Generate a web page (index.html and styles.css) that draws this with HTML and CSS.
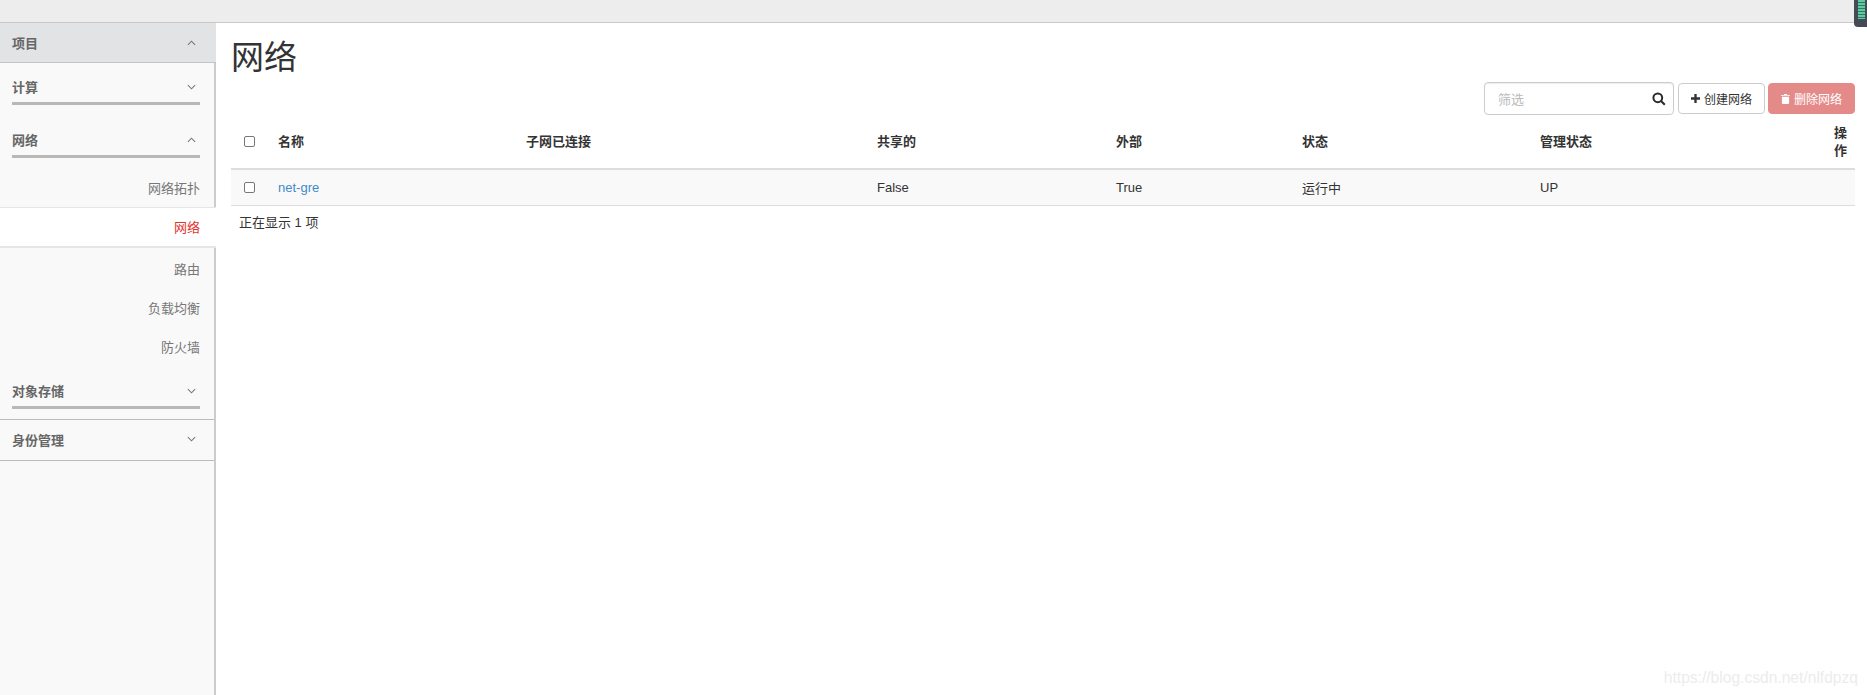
FILE: index.html
```html
<!DOCTYPE html>
<html lang="zh">
<head>
  <meta charset="UTF-8">
  <title>网络</title>
  <link rel="stylesheet" href="styles.css">
</head>
<body>
  <div class="topbar">
    <div class="meter"><span></span></div>
  </div>
  <div class="layout">
    <nav class="sidebar">
      <div class="project">
        <span>项目</span>
        <svg class="chev" viewBox="0 0 10 6"><path d="M1 5l4-4 4 4"/></svg>
      </div>
      <div class="group">
        <div class="group-title">
          <span>计算</span>
          <svg class="chev" viewBox="0 0 10 6"><path d="M1 1l4 4 4-4"/></svg>
        </div>
      </div>
      <div class="group">
        <div class="group-title">
          <span>网络</span>
          <svg class="chev" viewBox="0 0 10 6"><path d="M1 5l4-4 4 4"/></svg>
        </div>
      </div>
      <a class="item topo">网络拓扑</a>
      <a class="item active">网络</a>
      <a class="item after-active">路由</a>
      <a class="item">负载均衡</a>
      <a class="item">防火墙</a>
      <div class="group last">
        <div class="group-title">
          <span>对象存储</span>
          <svg class="chev" viewBox="0 0 10 6"><path d="M1 1l4 4 4-4"/></svg>
        </div>
      </div>
      <div class="identity">
        <span>身份管理</span>
        <svg class="chev" viewBox="0 0 10 6"><path d="M1 1l4 4 4-4"/></svg>
      </div>
    </nav>
    <main class="content">
      <h1>网络</h1>
      <div class="actions">
        <div class="filter">
          <span class="placeholder">筛选</span>
          <svg class="search" viewBox="0 0 14 14"><circle cx="5.8" cy="5.8" r="4.4"/><path d="M9 9l3.8 3.8"/></svg>
        </div>
        <button class="btn create">
          <svg class="plus" viewBox="0 0 10 10"><path d="M5 0v10M0 5h10"/></svg>创建网络
        </button>
        <button class="btn danger">
          <svg class="trash" viewBox="0 0 10 11"><path d="M3.5 0h3l.5 1h3v1H0V1h3zM1 3h8v7a1 1 0 0 1-1 1H2a1 1 0 0 1-1-1z"/></svg>删除网络
        </button>
      </div>
      <table class="net-table">
        <thead>
          <tr>
            <th class="c-check"><span class="check"></span></th>
            <th class="c-name">名称</th>
            <th class="c-subnet">子网已连接</th>
            <th class="c-shared">共享的</th>
            <th class="c-ext">外部</th>
            <th class="c-status">状态</th>
            <th class="c-admin">管理状态</th>
            <th class="c-ops">操作</th>
          </tr>
        </thead>
        <tbody>
          <tr>
            <td><span class="check"></span></td>
            <td><a class="link">net-gre</a></td>
            <td></td>
            <td>False</td>
            <td>True</td>
            <td>运行中</td>
            <td>UP</td>
            <td></td>
          </tr>
        </tbody>
      </table>
      <div class="count">正在显示 1 项</div>
    </main>
  </div>
  <div class="watermark">https://blog.csdn.net/nlfdpzq</div>
</body>
</html>
```

FILE: styles.css
```css
* { box-sizing: border-box; }
html, body { height: 100%; }
body {
  margin: 0;
  height: 695px;
  overflow: hidden;
  position: relative;
  font-family: "Liberation Sans", "Noto Sans CJK SC", sans-serif;
  font-size: 13px;
  color: #333;
  background: #fff;
}

.topbar {
  height: 23px;
  background: #ededed;
  border-bottom: 1px solid #c8c8c8;
  position: relative;
}

.meter {
  position: absolute;
  top: 0;
  right: 0;
  width: 13px;
  height: 27px;
  padding: 0 2px 0 4px;
  background: #454b55;
  border-bottom-left-radius: 4px;
  z-index: 2;
}
.meter span {
  display: block;
  width: 7px;
  height: 19px;
  background: repeating-linear-gradient(to bottom, #5fc9a0 0, #5fc9a0 2px, #2f7a68 2px, #2f7a68 3px);
}

.layout {
  display: flex;
  height: 672px;
}

.sidebar {
  width: 216px;
  flex: none;
  background: #f9f9f9;
  border-right: 2px solid #ccc;
  color: #666;
}

.chev {
  width: 9px;
  height: 6px;
  fill: none;
  stroke: #777;
  stroke-width: 1.2;
}

.project {
  height: 40px;
  background: #e2e3e5;
  border-bottom: 1px solid #c4c4c4;
  padding: 0 20px 0 12px;
  margin-right: -2px;
  display: flex;
  align-items: center;
  justify-content: space-between;
  font-weight: bold;
}

.group {
  height: 53px;
  padding: 17px 14px 0 12px;
}
.group.last { height: 52px; }
.group-title {
  height: 25px;
  border-bottom: 3px solid #b8b8b8;
  display: flex;
  align-items: flex-start;
  justify-content: space-between;
  padding-right: 4px;
  font-weight: bold;
  line-height: 16px;
}
.group-title .chev { margin-top: 4px; }

.item {
  display: flex;
  align-items: center;
  justify-content: flex-end;
  height: 39px;
  padding: 0 14px 2px 0;
  color: #777;
}
.item.topo { height: 38px; }
.item.after-active { margin-top: 2px; }
.item.active {
  height: 41px;
  margin-right: -2px;
  padding-right: 16px;
  background: #fff;
  color: #e3342f;
  border-top: 1px solid #e6e6e6;
  border-bottom: 2px solid #e6e6e6;
}

.identity {
  height: 42px;
  border-top: 1px solid #bbb;
  border-bottom: 1px solid #bbb;
  padding: 0 18px 2px 12px;
  display: flex;
  align-items: center;
  justify-content: space-between;
  font-weight: bold;
}

.content {
  flex: 1;
  padding: 0 12px 0 15px;
}

h1 {
  margin: 15px 0 0;
  font-size: 33px;
  font-weight: normal;
  line-height: 40px;
  color: #333;
}

.actions {
  display: flex;
  justify-content: flex-end;
  align-items: center;
  gap: 3px;
  margin-top: 4px;
  height: 33px;
}

.filter {
  width: 190px;
  height: 33px;
  padding: 0 7px 0 13px;
  border: 1px solid #ccc;
  border-radius: 4px;
  display: flex;
  align-items: center;
  justify-content: space-between;
  box-shadow: inset 0 1px 1px rgba(0,0,0,0.075);
}
.placeholder { color: #bbb; }
.search {
  width: 14px;
  height: 14px;
  fill: none;
  stroke: #2a2a2a;
  stroke-width: 2;
}

.btn {
  width: 87px;
  height: 31px;
  padding: 0;
  border: 1px solid #ccc;
  border-radius: 4px;
  background: #fff;
  color: #333;
  font: inherit;
  font-size: 12px;
  display: flex;
  align-items: center;
  justify-content: center;
  gap: 4px;
}
.btn.create { margin-left: 1px; }
.btn.danger {
  background: #e48b8a;
  border-color: #e48b8a;
  color: #fff;
}
.plus {
  width: 9px;
  height: 9px;
  stroke: #333;
  stroke-width: 2.6;
}
.trash {
  width: 9px;
  height: 10px;
  fill: #fff;
}

.net-table {
  width: 100%;
  border-collapse: collapse;
  table-layout: fixed;
}
.net-table th {
  height: 54px;
  padding: 0 8px;
  text-align: left;
  font-size: 13px;
  font-weight: bold;
  line-height: 18px;
  border-bottom: 2px solid #ddd;
}
.net-table td {
  height: 36px;
  padding: 0 8px;
  background: #f9f9f9;
  border-bottom: 1px solid #ddd;
}
.c-check { width: 39px; }
.c-name { width: 248px; }
.c-subnet { width: 351px; }
.c-shared { width: 239px; }
.c-ext { width: 186px; }
.c-status { width: 238px; }
.c-admin { width: 294px; }
.c-ops { width: 29px; }

.check {
  display: block;
  width: 11px;
  height: 11px;
  margin-left: 5px;
  border: 1px solid #777;
  border-radius: 2px;
  background: #fff;
}

.link { color: #428bca; }

.count {
  padding: 8px 8px 0;
  line-height: 18px;
}

.watermark {
  position: absolute;
  right: 9px;
  bottom: 8px;
  font-size: 15.6px;
  color: #ececec;
}
```
